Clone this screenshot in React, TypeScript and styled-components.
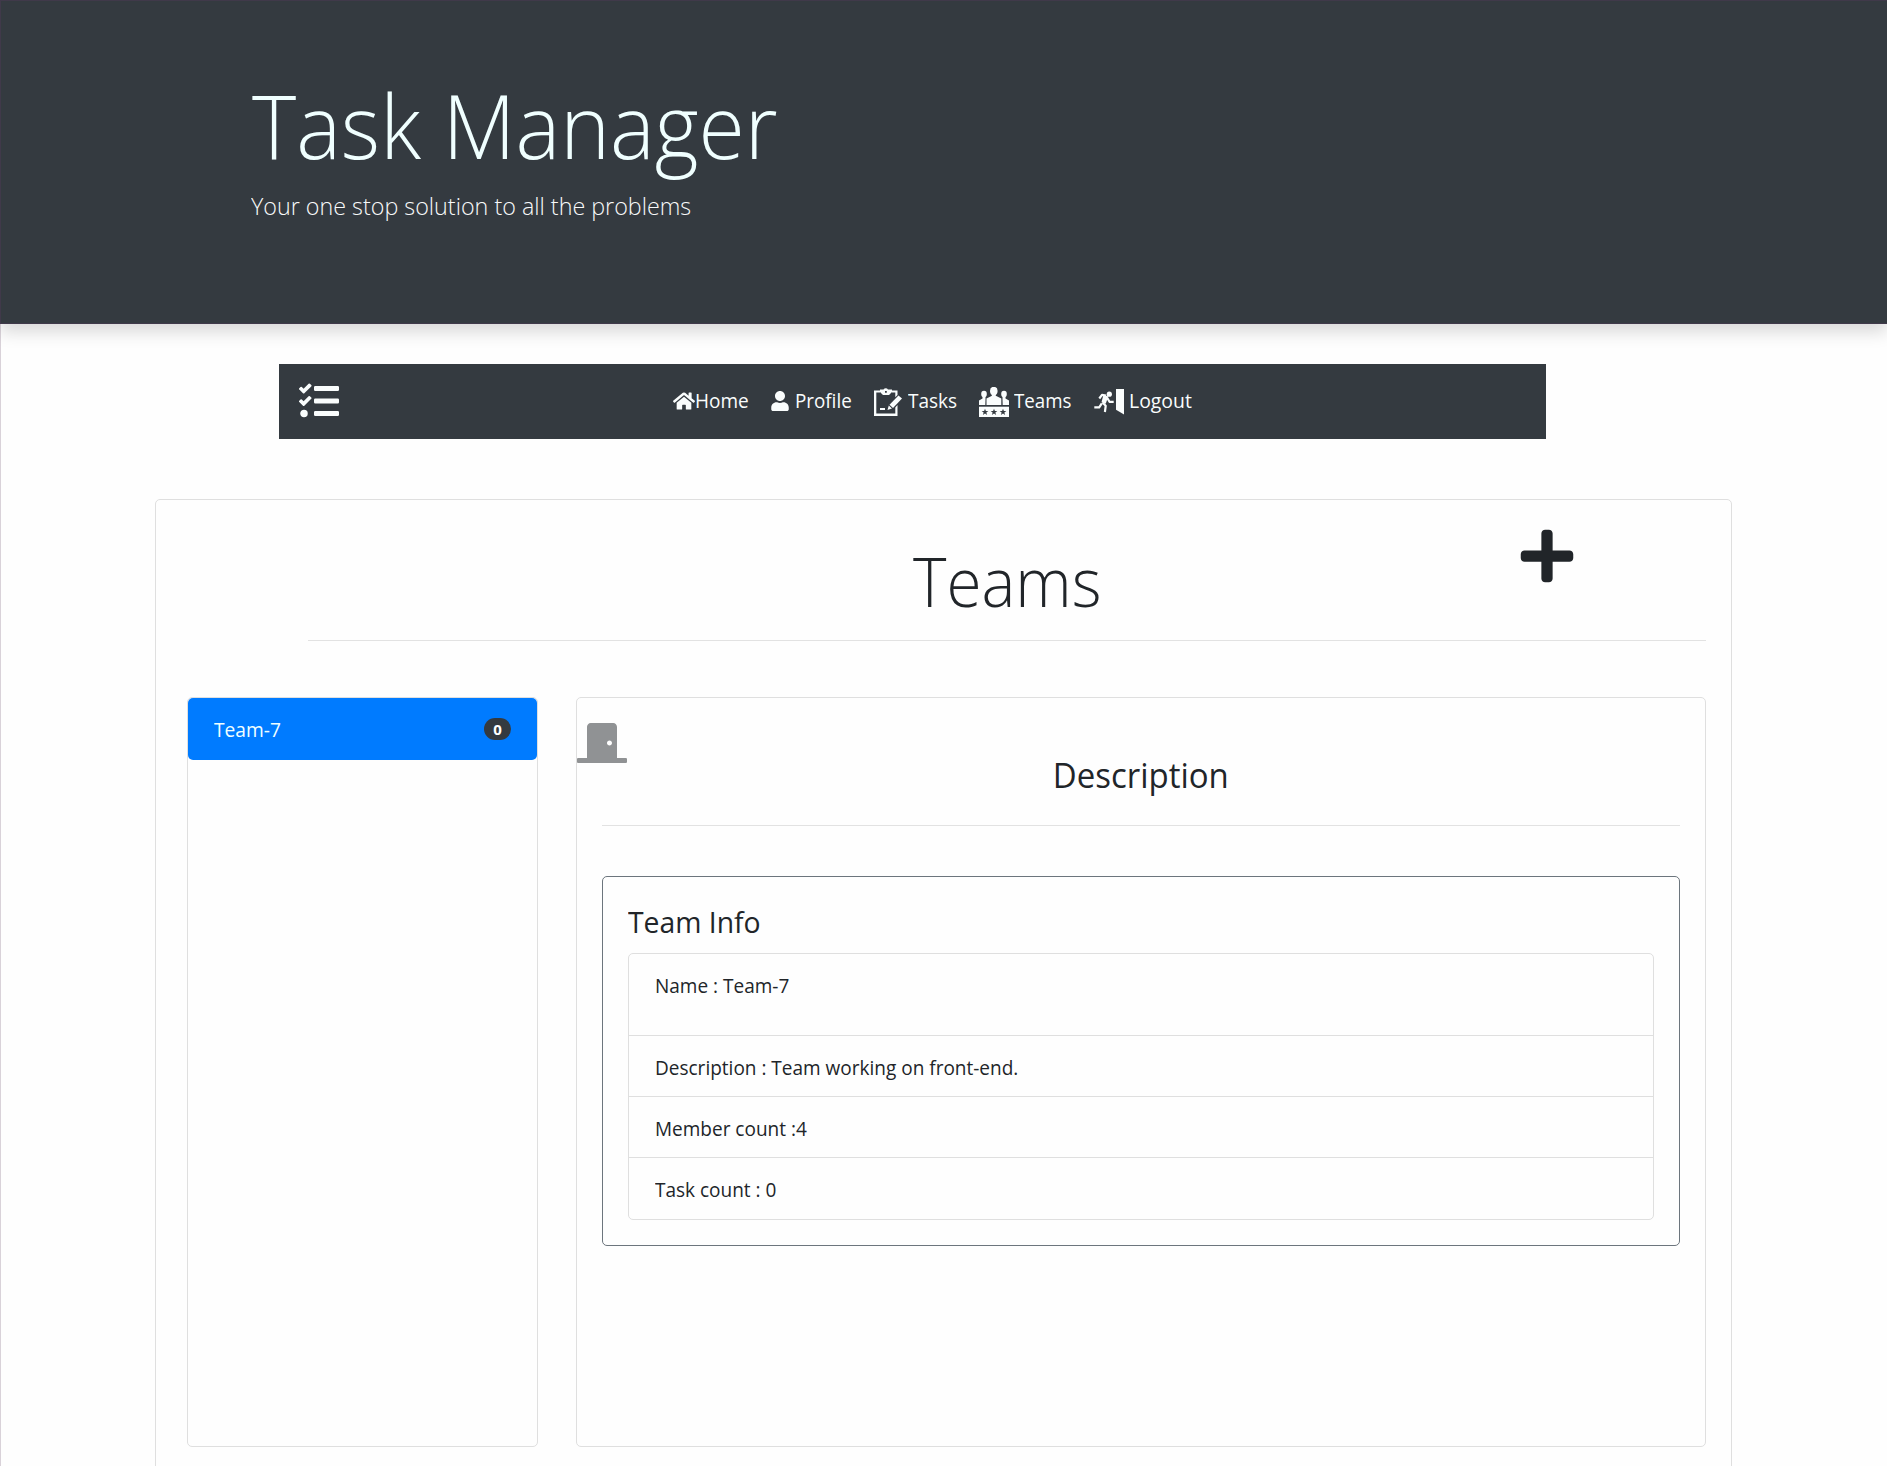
import React from "react";
import styled, { createGlobalStyle } from "styled-components";
import { FaTasks, FaHome, FaUser, FaPlus, FaDoorClosed } from "react-icons/fa";

const Global = createGlobalStyle`
  * { box-sizing: border-box; }
  html { overflow: hidden; }
  body {
    margin: 0;
    background: #fefefe;
    color: #212529;
    font: 400 19.6px/30px "Open Sans", "Noto Sans", sans-serif;
  }
  svg { display: block; flex: none; }
`;

const Page = styled.div`
  height: 1466px;
  overflow: hidden;
  box-shadow: inset 1px 0 0 #d9d2d9;
`;

const Header = styled.header`
  height: 324px;
  padding: 70px 0 0 250px;
  border: 1px solid #40394a;
  border-right: 0;
  background: #343a40;
  box-shadow: 0 8px 16px rgba(0, 0, 0, 0.15);
`;

const Text = styled.span<{ $scale?: number; $origin?: string }>`
  display: inline-block;
  white-space: nowrap;
  transform: scaleX(${(p) => p.$scale ?? 0.97});
  transform-origin: ${(p) => p.$origin ?? "left"};
`;

const Title = styled.h1`
  margin: 0 0 0 1px;
  font-weight: 300;
  font-size: 88px;
  line-height: 108px;
  color: azure;
`;

const Lead = styled.p`
  margin: 9px 0 0;
  font-weight: 300;
  font-size: 24.5px;
  line-height: 36px;
  color: #f8f9fa;
`;

const Navbar = styled.nav`
  display: flex;
  align-items: center;
  width: 1267px;
  height: 75px;
  margin: 40px 0 60px 279px;
  padding: 0 0 2px 20px;
  background: #343a40;
  color: #fafdfd;
`;

const Links = styled.div`
  display: flex;
  margin-left: 334px;
`;

const Link = styled.a<{ $width: number; $gap: number; $drop?: number }>`
  display: flex;
  align-items: center;
  width: ${(p) => p.$width}px;
  gap: ${(p) => p.$gap}px;
  svg { margin-top: ${(p) => p.$drop ?? 0}px; }
`;

const Card = styled.section`
  width: 1577px;
  height: 1000px;
  margin-left: 155px;
  padding: 29px 25px 0 31px;
  border: 1px solid #dfdfdf;
  border-radius: 5px;
`;

const CardHead = styled.div`
  display: flex;
  justify-content: space-between;
  height: 112px;
  margin-left: 121px;
  padding: 0 129px 0 605px;
  border-bottom: 1px solid #e2e2e2;
  svg { margin-top: -3px; }
`;

const Heading = styled.h2`
  margin: 6px 0 0;
  font-weight: 300;
  font-size: 69px;
  line-height: 90px;
`;

const Columns = styled.div`
  display: flex;
  gap: 38px;
  margin-top: 56px;
`;

const Panel = styled.div<{ $width: number }>`
  width: ${(p) => p.$width}px;
  height: 750px;
  border: 1px solid #dfdfdf;
  border-radius: 5px;
`;

const TeamItem = styled.div`
  display: flex;
  align-items: center;
  justify-content: space-between;
  height: 62px;
  padding: 1px 26px 0 26px;
  border-radius: 5px;
  background: #007bff;
  color: azure;
`;

const Badge = styled.span`
  width: 27px;
  height: 22px;
  margin-top: -2px;
  border-radius: 11px;
  background: #343a40;
  color: #fff;
  font-weight: 700;
  font-size: 15px;
  line-height: 22px;
  text-align: center;
`;

const DoorButton = styled.div`
  height: 40px;
  margin: 20px 0 2px;
  color: #909294;
`;

const PanelBody = styled.div`
  padding: 0 25px;
`;

const PanelTitle = styled.h3`
  height: 66px;
  margin: 0 0 50px;
  border-bottom: 1px solid #e2e2e2;
  font-weight: 400;
  font-size: 34px;
  line-height: 30px;
  text-align: center;
`;

const InfoCard = styled.div`
  height: 370px;
  padding: 25px 25px 0;
  border: 1px solid #6c757d;
  border-radius: 5px;
`;

const InfoTitle = styled.h4`
  margin: 0 0 11px;
  font-weight: 400;
  font-size: 29.5px;
  line-height: 40px;
`;

const List = styled.div`
  border: 1px solid #dfdfdf;
  border-radius: 5px;
`;

const Row = styled.div<{ $height: number }>`
  height: ${(p) => p.$height}px;
  padding: 17px 0 0 26px;
  border-bottom: 1px solid #dfdfdf;
  &:last-child { border-bottom: 0; }
`;

const ClipboardIcon = () => (
  <svg width="28" height="28" viewBox="0 0 28 28" fill="currentColor">
    <path d="M0 2.500h6v2H2.300V25.500h19V19.500l2.200-2.500v11H0z" />
    <path fillRule="evenodd" d="M6 1.500h3.500a2.800 2.800 0 0 1 4.500 0h4V4l-3 3H9L6 4zM11 3v1.800h1.800V3z" />
    <path d="M18 2.500h5.500V7l-2.200 2.200V4.500H18z" />
    <path d="m24.500 7.500 3.500 3-9 9.500-3.500-3.300z" />
    <path d="m14.800 17.500 3.200 3-4.500 1.500z" />
    <path d="M6 20h5v2H6z" />
  </svg>
);

const STAR = "M0-3 .8-.9 3-.9 1.200.5 1.900 2.700 0 1.400-1.900 2.700-1.200.5-3-.9-.8-.9z";

const TeamsIcon = () => (
  <svg width="30" height="30" viewBox="0 0 30 30" fill="currentColor">
    <ellipse cx="14.800" cy="4" rx="3.800" ry="4.200" />
    <path d="M12.800 7h4v3h-4z" />
    <path d="M7.500 18v-6.500l5-2.500h4.800l5 2.500V18z" />
    <ellipse cx="5" cy="7" rx="2.800" ry="3.300" />
    <path d="M3.500 9h3v3l-.2 6H0v-4.500l3.500-2z" />
    <ellipse cx="25" cy="7" rx="2.800" ry="3.300" />
    <path d="M26.500 9h-3v3l.2 6H30v-4.500l-3.500-2z" />
    <path d="M0 19.700h30V30H0z" />
    {[6, 15, 24].map((x) => (
      <path key={x} d={STAR} fill="#343a40" transform={`translate(${x} 25) scale(1.12)`} />
    ))}
  </svg>
);

const ExitIcon = () => (
  <svg width="30" height="26" viewBox="0 0 30 26" fill="currentColor">
    <path d="M22 0h8v25.500l-8-4.800z" />
    <circle cx="15.300" cy="5.200" r="2.600" />
    <g fill="none" stroke="currentColor" strokeWidth="2.200" strokeLinejoin="round">
      <path d="M5.300 9.500 8 5.800l4 .7" />
      <path d="m13 8.500 2.500 4.300h4.200" />
      <path d="M.3 18.300h4.900l2.600-4" />
      <path d="m8.500 13.500 3.200 3.300-.8 6.200" />
    </g>
    <path d="m9.500 5.500 4.800 2-2.600 7.300-4.200-1.500z" />
  </svg>
);

export default function App() {
  return (
    <Page>
      <Global />
      <Header>
        <Title><Text $scale={0.958}>Task Manager</Text></Title>
        <Lead><Text $scale={0.951}>Your one stop solution to all the problems</Text></Lead>
      </Header>
      <Navbar>
        <FaTasks size={40} />
        <Links>
          <Link $width={97} $gap={0}><FaHome size={22} /><Text>Home</Text></Link>
          <Link $width={104} $gap={5}><FaUser size={20} /><Text $scale={0.96}>Profile</Text></Link>
          <Link $width={105} $gap={6} $drop={3}><ClipboardIcon /><Text>Tasks</Text></Link>
          <Link $width={115} $gap={5} $drop={3}><TeamsIcon /><Text $scale={0.955}>Teams</Text></Link>
          <Link $width={100} $gap={5} $drop={2}><ExitIcon /><Text $scale={0.99}>Logout</Text></Link>
        </Links>
      </Navbar>
      <Card>
        <CardHead>
          <Heading><Text $scale={0.925}>Teams</Text></Heading>
          <FaPlus size={60} />
        </CardHead>
        <Columns>
          <Panel $width={351}>
            <TeamItem><Text $scale={0.98}>Team-7</Text><Badge>0</Badge></TeamItem>
          </Panel>
          <Panel $width={1130}>
            <DoorButton><FaDoorClosed size={50} /></DoorButton>
            <PanelBody>
              <PanelTitle><Text $origin="center">Description</Text></PanelTitle>
              <InfoCard>
                <InfoTitle><Text $scale={0.96}>Team Info</Text></InfoTitle>
                <List>
                  <Row $height={82}><Text>Name : Team-7</Text></Row>
                  <Row $height={61}><Text>Description : Team working on front-end.</Text></Row>
                  <Row $height={61}><Text>Member count :4</Text></Row>
                  <Row $height={61}><Text>Task count : 0</Text></Row>
                </List>
              </InfoCard>
            </PanelBody>
          </Panel>
        </Columns>
      </Card>
    </Page>
  );
}
